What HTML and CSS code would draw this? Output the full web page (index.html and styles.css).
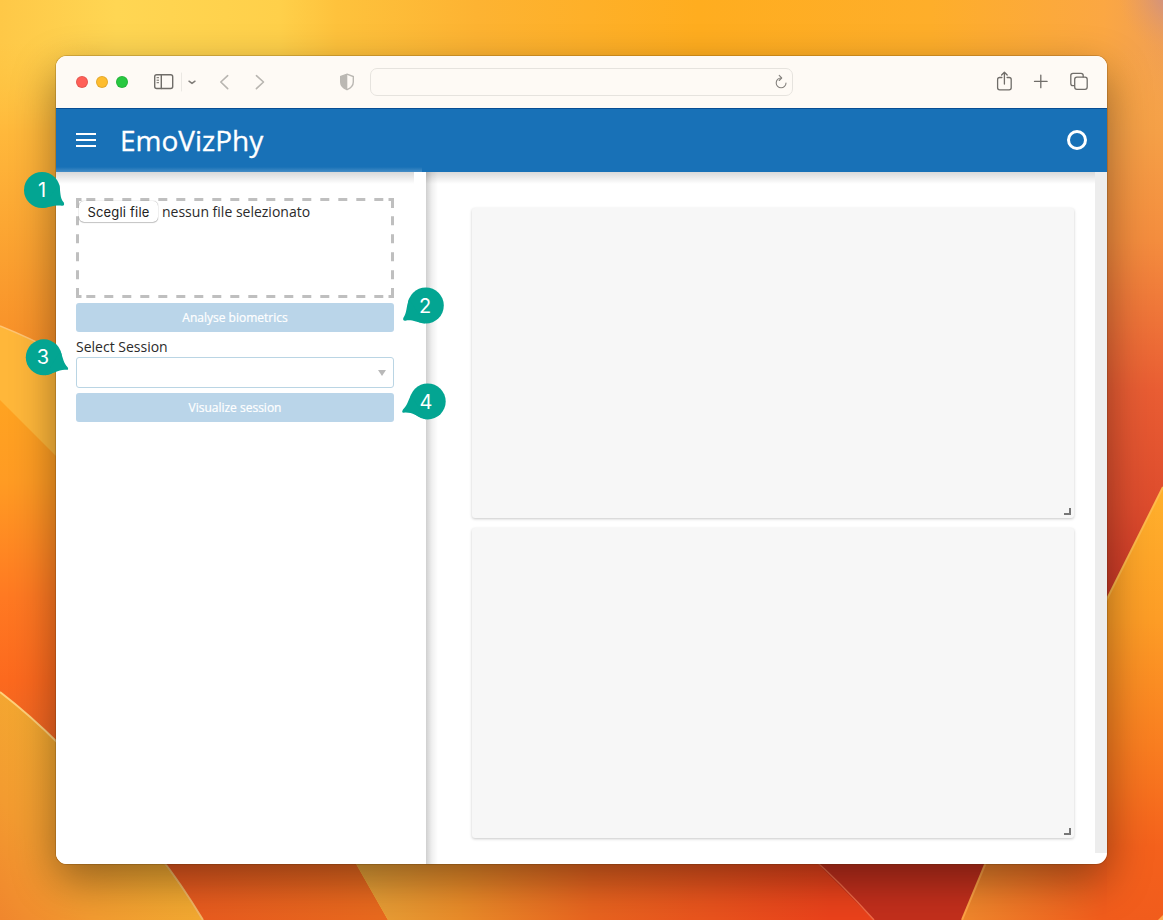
FILE: index.html
```html
<!DOCTYPE html>
<html lang="it">
<head>
<meta charset="utf-8">
<title>EmoVizPhy</title>
<link rel="stylesheet" href="styles.css">
</head>
<body>
<div class="desktop">
  <svg class="wallpaper" width="1163" height="920" viewBox="0 0 1163 920" aria-hidden="true">
    <defs>
      <linearGradient id="sky" x1="0" x2="1163" y1="0" y2="0" gradientUnits="userSpaceOnUse"><stop offset="0" stop-color="#fec847"/><stop offset=".1" stop-color="#ffd653"/><stop offset=".24" stop-color="#ffd04a"/><stop offset=".29" stop-color="#fec23c"/><stop offset=".41" stop-color="#fdb332"/><stop offset=".6" stop-color="#ffad1f"/><stop offset=".8" stop-color="#feae2a"/><stop offset=".95" stop-color="#fba743"/><stop offset="1" stop-color="#f09f53"/></linearGradient>
      <linearGradient id="left" x1="0" x2="0" y1="0" y2="350" gradientUnits="userSpaceOnUse"><stop offset=".12" stop-color="#ffc340" stop-opacity="0"/><stop offset=".38" stop-color="#ffb83b"/><stop offset="1" stop-color="#f88f28"/></linearGradient>
      <linearGradient id="fold" x1="0" x2="0" y1="400" y2="730" gradientUnits="userSpaceOnUse"><stop offset="0" stop-color="#ffa321"/><stop offset=".25" stop-color="#ff9b23"/><stop offset=".6" stop-color="#ff7922"/><stop offset=".85" stop-color="#fc691e"/><stop offset="1" stop-color="#f26622"/></linearGradient>
      <linearGradient id="low" x1="150" x2="-10" y1="830" y2="950" gradientUnits="userSpaceOnUse"><stop offset="0" stop-color="#f4ac31"/><stop offset=".5" stop-color="#f39b30"/><stop offset="1" stop-color="#ef7f2c"/></linearGradient>
      <linearGradient id="right" x1="0" x2="0" y1="0" y2="600" gradientUnits="userSpaceOnUse"><stop offset=".08" stop-color="#fba742" stop-opacity="0"/><stop offset=".22" stop-color="#f5a047"/><stop offset=".4" stop-color="#f48d3e"/><stop offset=".65" stop-color="#e95d33"/><stop offset=".84" stop-color="#de4c2d"/><stop offset="1" stop-color="#cb3726"/></linearGradient>
      <linearGradient id="wing" x1="0" x2="0" y1="490" y2="920" gradientUnits="userSpaceOnUse"><stop offset="0" stop-color="#ffb02c"/><stop offset=".3" stop-color="#fd9d26"/><stop offset=".6" stop-color="#f97d20"/><stop offset=".83" stop-color="#f4611c"/><stop offset="1" stop-color="#f15c1c"/></linearGradient>
      <linearGradient id="sweep" x1="356" x2="830" y1="0" y2="0" gradientUnits="userSpaceOnUse"><stop offset="0" stop-color="#e7a238"/><stop offset=".22" stop-color="#ea8c29"/><stop offset=".5" stop-color="#e9641f"/><stop offset="1" stop-color="#eb421b"/></linearGradient>
      <linearGradient id="coral" x1="165" x2="388" y1="0" y2="0" gradientUnits="userSpaceOnUse"><stop offset="0" stop-color="#e9591f"/><stop offset="1" stop-color="#ea6b1e"/></linearGradient>
      <linearGradient id="ember" x1="960" x2="1105" y1="880" y2="900" gradientUnits="userSpaceOnUse"><stop offset="0" stop-color="#f08a2d"/><stop offset="1" stop-color="#f15c1c"/></linearGradient>
      <radialGradient id="mauve" cx="1180" cy="-8" r="62" gradientUnits="userSpaceOnUse"><stop offset="0" stop-color="#bb899b"/><stop offset="1" stop-color="#e69a68" stop-opacity="0"/></radialGradient>
    </defs>
    <rect width="1163" height="920" fill="url(#sky)"/>
    <rect width="100" height="360" fill="url(#left)"/>
    <path d="M1040 0H1163V600H1040Z" fill="url(#right)"/>
    <rect x="1050" width="113" height="110" fill="url(#mauve)"/>
    <path d="M0 326Q30 338 60 354V470L0 410Z" fill="#ffb73a"/>
    <path d="M0 326Q30 338 60 354" fill="none" stroke="#ffc574" stroke-width="1.5"/>
    <path d="M0 400L100 500V780L0 692Z" fill="url(#fold)"/>
    <path d="M0 692Q30 715 60 745L165 864 204 920H0Z" fill="url(#low)"/>
    <path d="M0 692Q30 715 60 745" fill="none" stroke="#ffd17b" stroke-width="2"/>
    <path d="M160 857Q180 882 203 920H388L351 855Z" fill="url(#coral)"/>
    <path d="M160 857Q180 882 203 920" fill="none" stroke="#f3b765" stroke-width="2"/>
    <path d="M351 855H840L880 920H388Z" fill="url(#sweep)"/>
    <path d="M809 855H990L962 920H874Z" fill="#c32f1c"/>
    <path d="M809 855Q840 882 874 920" fill="none" stroke="#f16a45" stroke-width="1.5"/>
    <path d="M1090 633L1163 487V920H1090Z" fill="url(#wing)"/>
    <path d="M1090 633L1163 487" stroke="#ffba4b" stroke-width="2"/>
    <path d="M989 855H1107V920H962Z" fill="url(#ember)"/>
    <path d="M989 855L962 920" stroke="#ffa345" stroke-width="2"/>
    <path d="M1158 920L1163 915V920Z" fill="#ffad50"/>
  </svg>

  <div class="window-shadow"></div>
  <div class="window">
    <div class="toolbar">
      <div class="lights"><i class="light red"></i><i class="light amber"></i><i class="light green"></i></div>
      <svg class="nav-icons" width="120" height="30" viewBox="0 0 120 30" fill="none" stroke-linecap="round" stroke-linejoin="round">
        <g stroke="#706d69" stroke-width="1.4"><rect x="4.7" y="7.7" width="18" height="13.8" rx="2"/><path d="M11.3 7.7V21.5"/><path d="M7 10.7h1.6M7 13.2h1.6M7 15.7h1.6" stroke-width="1"/></g>
        <path d="M31.5 6V24" stroke="#ebe8e3" stroke-width="1"/>
        <path d="M39 14.2L42 16.4 45 14.2" stroke="#807d79" stroke-width="1.5"/>
        <path d="M77.7 8.7L70.8 15 77.7 21.6" stroke="#b8b5b0" stroke-width="1.6"/>
        <path d="M106.4 8.7L113.5 15 106.4 21.6" stroke="#b8b5b0" stroke-width="1.6"/>
      </svg>
      <svg class="shield" width="16" height="18" viewBox="0 0 16 18"><path d="M8 1.2L14.3 3.5V9C14.3 12.6 11.8 15 8 16.7 4.2 15 1.7 12.6 1.7 9V3.5Z" fill="none" stroke="#bbb8b3" stroke-width="1.4"/><path d="M8.3 1.2L1.7 3.5V9C1.7 12.6 4.2 15 8.3 16.7Z" fill="#bbb8b3"/></svg>
      <div class="address">
        <svg width="14" height="16" viewBox="0 0 14 16" fill="none" stroke="#85827e" stroke-width="1.1" stroke-linecap="round" stroke-linejoin="round"><path d="M7 4A4.9 4.9 0 1 0 12 9"/><path d="M5.2 1.4L7.7 4 5.2 6.5"/></svg>
      </div>
      <svg class="actions" width="96" height="26" viewBox="0 0 96 26" fill="none" stroke="#706d69" stroke-width="1.3" stroke-linecap="round" stroke-linejoin="round">
        <path d="M5.9 8.5H3.7Q1.6 8.5 1.6 10.5V18.8Q1.6 20.8 3.7 20.8H13.1Q15.2 20.8 15.2 18.8V10.5Q15.2 8.5 13.1 8.5H11.1M8.4 15V3.3M5.6 6L8.4 3.2 11.2 6"/>
        <path d="M38.5 12.4H51.1M44.8 6.1V18.7"/>
        <rect x="78.7" y="8.2" width="12.5" height="12.1" rx="2.2"/><path d="M78.4 16.6H77Q74.8 16.6 74.8 14.4V6.6Q74.8 4.4 77 4.4H85Q87.2 4.4 87.2 6.6V7.9"/>
      </svg>
    </div>

    <header class="app-header">
      <div class="burger"><i></i><i></i><i></i></div>
      <div class="title">EmoVizPhy</div>
      <div class="status"></div>
    </header>

    <div class="content">
      <aside class="sidebar">
        <div class="drop">
          <svg class="dashes" width="318" height="100" viewBox="0 0 318 100" fill="none" stroke="#bfbfbf" stroke-width="3">
            <path d="M10.3 1.5H308M10.3 98.5H308" stroke-dasharray="9 9"/>
            <path d="M1.5 18.3V82M316.5 18.3V82" stroke-dasharray="9 9"/>
            <path d="M5.5 1.5H1.5V10M312.5 1.5H316.5V10M5.5 98.5H1.5V90M312.5 98.5H316.5V90"/>
          </svg>
          <span class="choose">Scegli file</span><span class="filename">nessun file selezionato</span>
        </div>
        <div class="button">Analyse biometrics</div>
        <div class="label">Select Session</div>
        <div class="select"><i class="caret"></i></div>
        <div class="button">Visualize session</div>
        <div class="gutter"></div>
      </aside>
      <main class="main">
        <div class="cards">
          <section class="card"><i class="grip"></i></section>
          <section class="card"><i class="grip"></i></section>
        </div>
        <div class="scrollbar"></div>
      </main>
      <div class="header-shade"></div>
    </div>
  </div>

  <div class="pin pin-1"><svg width="70" height="60" viewBox="0 0 70 60"><circle cx="22" cy="30" r="18"/><path d="M39 24C41 32 39.5 38 43.8 42.5Q45 46 42 45.8C34 45 32 47 22 48Z"/></svg><span>1</span></div>
  <div class="pin pin-2"><svg width="70" height="60" viewBox="0 0 70 60"><circle cx="24.8" cy="29.5" r="18"/><path d="M8 23C5 31 6 37 2.3 42Q1.5 45 4.5 44.7C10 43 15 46 24 47.5Z"/></svg><span>2</span></div>
  <div class="pin pin-3"><svg width="70" height="60" viewBox="0 0 70 60"><circle cx="20.8" cy="29.3" r="18"/><path d="M37.5 23C40 30 40.5 35 44.8 39.5Q46 42.5 43 41.7C36 41 30 46 22 47.3Z"/></svg><span>3</span></div>
  <div class="pin pin-4"><svg width="70" height="60" viewBox="0 0 70 60"><circle cx="26.7" cy="29.4" r="18"/><path d="M10 23C7 29 6 34 2 37.5Q0 41 3 40.7C11 40 15 44 25 47.4Z"/></svg><span>4</span></div>
</div>
</body>
</html>
```
FILE: styles.css
```css
* { box-sizing: border-box; }
body { margin: 0; font-family: "Open Sans", "Noto Sans", sans-serif; color: #2b2b2b; }
i { display: block; }
svg { display: block; flex: none; }
.desktop { position: relative; width: 1163px; height: 920px; padding: 56px; overflow: hidden; }
.wallpaper { position: absolute; inset: 0; }
.window { position: relative; width: 1051px; height: 808px; border-radius: 11px; overflow: hidden; background: #fff; display: flex; flex-direction: column; }
.window-shadow { position: absolute; left: 56px; top: 56px; width: 1051px; height: 808px; border-radius: 11px; box-shadow: 0 0 0 1px rgba(70,40,0,.2), 0 16px 44px rgba(0,0,0,.4); }

.toolbar { flex: none; height: 53px; background: #fefaf5; border-bottom: 1px solid #084d93; display: flex; align-items: center; padding: 0 15px 0 20px; }
.lights { display: flex; gap: 8px; }
.light { width: 12px; height: 12px; border-radius: 50%; border: 1px solid rgba(0,0,0,.1); }
.red { background: #ff5f57; }
.amber { background: #febc2e; }
.green { background: #28c840; }
.nav-icons { margin-left: 22px; margin-bottom: 2px; margin-top: 2px; }
.shield { margin-left: 69px; }
.address { width: 423px; height: 28px; margin-left: 15px; border: 1px solid #e6e3de; border-radius: 7px; display: flex; align-items: center; justify-content: flex-end; padding-right: 4px; }
.actions { margin-left: 203px; }

.app-header { flex: none; height: 63px; background: linear-gradient(rgba(255,255,255,0), rgba(255,255,255,.2)) 0 100% / 366px 5px no-repeat #1871b7; display: flex; align-items: center; padding: 0 20px 2px; color: #fff; }
.burger { width: 20px; display: flex; flex-direction: column; gap: 4px; }
.burger i { height: 2px; background: #fff; }
.title { margin-left: 24px; font-size: 28px; line-height: 38px; -webkit-text-stroke: .3px #fff; }
.status { margin-left: auto; width: 20px; height: 20px; border: 3px solid #fff; border-radius: 50%; }

.content { position: relative; flex: 1; display: flex; min-height: 0; }
.header-shade { position: absolute; left: 370px; right: 12px; top: 0; height: 12px; background: linear-gradient(rgba(0,0,0,.15), transparent); }
.sidebar { position: relative; z-index: 1; width: 370px; padding: 26px 32px 0 20px; background: #fff; }
.gutter { position: absolute; right: 0; top: 0; width: 12px; height: 680px; background: #fff; }
.sidebar::before { content: ""; position: absolute; left: 0; right: 0; top: 0; height: 12px; background: linear-gradient(rgba(0,0,0,.15), transparent); }
.sidebar::after { content: ""; position: absolute; left: 100%; top: 0; bottom: 0; width: 12px; background: linear-gradient(90deg, rgba(0,0,0,.19), rgba(0,0,0,.06) 50%, transparent); }
.drop { position: relative; height: 100px; padding: 3px; display: flex; align-items: flex-start; font-size: 14px; }
.dashes { position: absolute; left: 0; top: 0; }
.choose { position: relative; width: 79px; height: 21px; line-height: 22px; text-align: center; border-radius: 5px; background: #fff; box-shadow: 0 0 1px rgba(0,0,0,.45), 0 1px 1px rgba(0,0,0,.2); font-family: Inter, "Liberation Sans", sans-serif; font-size: 13px; letter-spacing: .2px; color: #222; }
.filename { margin-left: 4px; line-height: 22px; }
.button { height: 29px; margin-top: 5px; border-radius: 3px; background: #bad5e9; color: #fff; font-size: 12px; line-height: 29px; text-align: center; -webkit-text-stroke: .2px #fff; }
.label { margin-top: 5px; height: 20px; font-size: 14px; line-height: 20px; }
.select { height: 31px; border: 1px solid #bad5e4; border-radius: 3px; display: flex; justify-content: flex-end; align-items: center; padding-right: 7px; }
.caret { border: 4px solid transparent; border-top: 6px solid #b9b9b9; border-bottom: 0; }
.main { flex: 1; display: flex; justify-content: space-between; }
.cards { margin: 36px 0 0 46px; width: 602px; display: flex; flex-direction: column; gap: 10px; }
.card { height: 310px; background: #f7f7f7; border-radius: 3px; box-shadow: 0 1px 3px rgba(0,0,0,.22); display: flex; align-items: flex-end; justify-content: flex-end; padding: 3px; }
.grip { width: 7px; height: 7px; border: 2px solid #777; border-width: 0 2px 2px 0; }
.scrollbar { width: 12px; height: 681px; background: #ededed; }

.pin { position: absolute; z-index: 2; width: 70px; height: 60px; fill: #03a592; }
.pin span { position: absolute; width: 40px; line-height: 24px; text-align: center; color: #fff; font-family: Inter, sans-serif; font-size: 20px; }
.pin-1 { left: 20px; top: 160px; }
.pin-1 span { left: 2px; top: 18px; }
.pin-2 { left: 401px; top: 276px; }
.pin-2 span { left: 4px; top: 18px; }
.pin-3 { left: 23px; top: 328px; }
.pin-3 span { left: 0; top: 17px; }
.pin-4 { left: 401px; top: 372px; }
.pin-4 span { left: 5px; top: 18px; }
```
